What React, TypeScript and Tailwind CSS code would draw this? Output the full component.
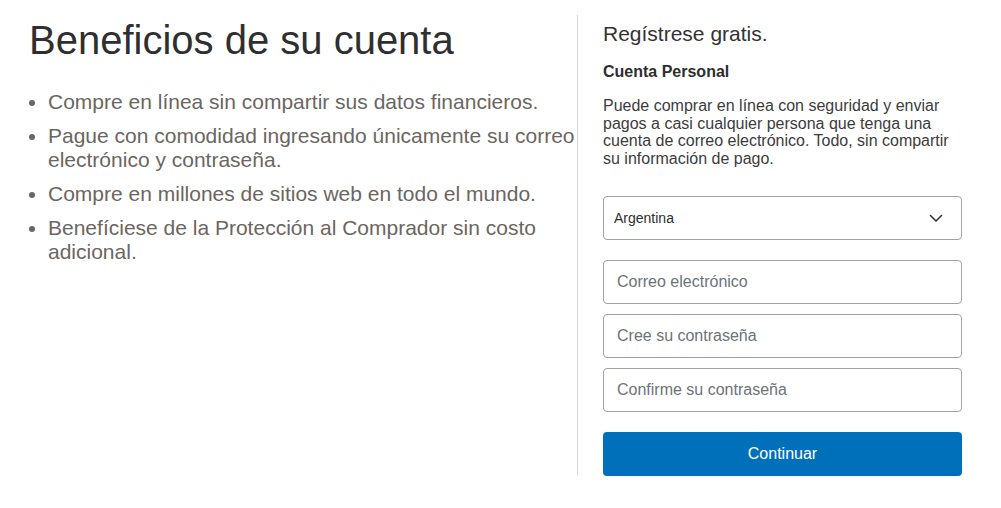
import React from "react";

const font = { fontFamily: '"Liberation Sans", Arial, sans-serif' };

export default function App() {
  const bullets = [
    "Compre en línea sin compartir sus datos financieros.",
    "Pague con comodidad ingresando únicamente su correo electrónico y contraseña.",
    "Compre en millones de sitios web en todo el mundo.",
    "Benefíciese de la Protección al Comprador sin costo adicional.",
  ];
  return (
    <div style={font} className="w-[1001px] h-[508px] bg-white flex pt-[15px]">
      <div className="w-[578px] h-[460px] border-r border-[#d6d6d6] pl-[29px] pr-[2px]">
        <h1 className="text-[40px] leading-[48px] text-[#2f2f2f] font-normal mt-[1px]">
          Beneficios de su cuenta
        </h1>
        <ul className="mt-[26px] list-disc pl-[19px] text-[21px] leading-[24px] text-[#6b665f]">
          {bullets.map((b) => (
            <li key={b} className="mb-[10px] marker:text-[#6b665f]">
              {b}
            </li>
          ))}
        </ul>
      </div>
      <div className="w-[384px] pl-[25px]">
        <h2 className="mt-[5px] text-[21px] leading-[28px] text-[#333333] font-normal">
          Regístrese gratis.
        </h2>
        <p className="mt-[14px] text-[16px] leading-[20px] font-bold text-[#2c2e2f]">
          Cuenta Personal
        </p>
        <p className="mt-[15px] text-[16px] leading-[17.5px] text-[#3c3c3c]">
          Puede comprar en línea con seguridad y enviar pagos a casi cualquier persona que tenga una
          cuenta de correo electrónico. Todo, sin compartir su información de pago.
        </p>
        <div className="mt-[29px] h-[44px] rounded-[4px] border border-[#9da3a6] flex items-center justify-between pl-[10px] pr-[18px]">
          <span className="text-[14px] text-[#2c2e2f]">Argentina</span>
          <svg width="14" height="9" viewBox="0 0 14 9" fill="none">
            <path d="M1.5 1.5 L7 7 L12.5 1.5" stroke="#2c2e2f" strokeWidth="1.5" strokeLinecap="round" strokeLinejoin="round" />
          </svg>
        </div>
        <div className="mt-[20px] flex flex-col gap-[10px]">
          {["Correo electrónico", "Cree su contraseña", "Confirme su contraseña"].map((p) => (
            <div
              key={p}
              className="h-[44px] rounded-[4px] border border-[#9da3a6] flex items-center pl-[13px]"
            >
              <span className="text-[16px] text-[#6c7378]">{p}</span>
            </div>
          ))}
        </div>
        <button className="mt-[20px] w-full h-[44px] rounded-[4px] bg-[#0070ba] text-white text-[16px]">
          Continuar
        </button>
      </div>
    </div>
  );
}
